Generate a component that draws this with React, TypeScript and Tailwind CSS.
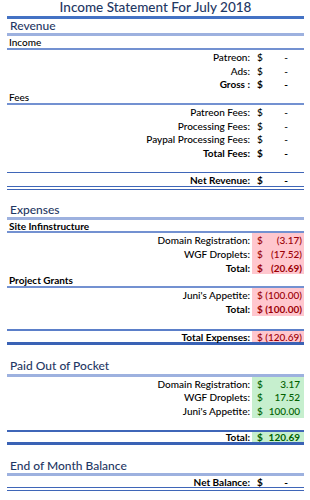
type Tone = 'none' | 'bad' | 'good';

type ItemProps = {
  label: string;
  value: string;
  bold?: boolean;
  valueBold?: boolean;
  tone?: Tone;
  className?: string;
};

function Item({ label, value, bold, valueBold, tone = 'none', className = '' }: ItemProps) {
  const toneCls =
    tone === 'bad'
      ? 'bg-[#FFC7CE] text-[#9C0006]'
      : tone === 'good'
        ? 'bg-[#C6EFCE] text-[#006100]'
        : 'text-black';
  const valuePad = value === '-' ? 'pr-[16px]' : value.startsWith('(') ? 'pr-[2px]' : 'pr-[4px]';

  return (
    <div className={`flex text-[10px] leading-none ${className}`}>
      <div className={`flex-1 flex items-center justify-end pr-[2px] text-black ${bold ? 'font-bold' : 'font-medium'}`}>
        {label}
      </div>
      <div className={`w-[52px] flex items-center justify-between pl-[5px] ${toneCls} ${valueBold ? 'font-bold' : 'font-medium'}`}>
        <span>$</span>
        <span className={valuePad}>{value}</span>
      </div>
    </div>
  );
}

function Heading({ children, className = '' }: { children: string; className?: string }) {
  return (
    <div className={`flex items-center pl-[3px] text-[12px] leading-none font-medium text-[#1F3864] ${className}`}>
      {children}
    </div>
  );
}

function Sub({ children, bold, className = '' }: { children: string; bold?: boolean; className?: string }) {
  return (
    <div className={`flex items-center pl-[2px] text-[10px] leading-none text-black ${bold ? 'font-bold' : 'font-medium'} ${className}`}>
      {children}
    </div>
  );
}

export default function App() {
  return (
    <div className="w-[310px] h-[500px] bg-white font-[Lato,'Liberation_Sans',sans-serif] overflow-hidden">
      <div className="ml-[7px] w-[297px] flex flex-col">
        {/* Title */}
        <div className="h-[19px] flex items-center justify-center border-b-[3px] border-[#4472C4] text-[13.5px] leading-none font-medium text-[#1F3864]">
          Income Statement For July 2018
        </div>

        {/* Revenue */}
        <Heading className="h-[17px] border-b-[3px] border-[#9DB1DF]">Revenue</Heading>
        <Sub className="h-[14px] border-b-2 border-[#7391D1]">Income</Sub>
        <Item className="h-[14px]" label="Patreon:" value="-" />
        <Item className="h-[13px]" label="Ads:" value="-" />
        <Item className="h-[13px]" label="Gross :" value="-" bold valueBold />
        <Sub className="h-[15px] border-b-2 border-[#7391D1]">Fees</Sub>
        <Item className="h-[14px]" label="Patreon Fees:" value="-" />
        <Item className="h-[13px]" label="Processing Fees:" value="-" />
        <Item className="h-[14px]" label="Paypal Processing Fees:" value="-" />
        <Item className="h-[13px]" label="Total Fees:" value="-" bold valueBold />
        <div className="h-[13px]" />
        <Item
          className="h-[18px] border-t border-b-4 border-double border-[#3F66B8]"
          label="Net Revenue:"
          value="-"
          bold
          valueBold
        />
        <div className="h-[13px]" />

        {/* Expenses */}
        <Heading className="h-[17px] border-b-[3px] border-[#9DB1DF]">Expenses</Heading>
        <Sub bold className="h-[13px] border-b-2 border-[#7391D1]">Site Infinstructure</Sub>
        <Item className="h-[14px]" label="Domain Registration:" value="(3.17)" tone="bad" />
        <Item className="h-[14px]" label="WGF Droplets:" value="(17.52)" tone="bad" />
        <Item className="h-[13px]" label="Total:" value="(20.69)" tone="bad" bold valueBold />
        <Sub bold className="h-[14px] border-b-2 border-[#7391D1]">Project Grants</Sub>
        <Item className="h-[14px]" label="Juni's Appetite:" value="(100.00)" tone="bad" />
        <Item className="h-[14px]" label="Total:" value="(100.00)" tone="bad" bold valueBold />
        <div className="h-[13px]" />
        <Item
          className="h-[16px] border-t-2 border-b-[3px] border-t-[#5B7FC9] border-b-[#3A62B5]"
          label="Total Expenses:"
          value="(120.69)"
          tone="bad"
          bold
        />
        <div className="h-[13px]" />

        {/* Paid out of pocket */}
        <Heading className="h-[19px] border-b-[3px] border-[#9DB1DF]">Paid Out of Pocket</Heading>
        <Item className="h-[13px]" label="Domain Registration:" value="3.17" tone="good" />
        <Item className="h-[14px]" label="WGF Droplets:" value="17.52" tone="good" />
        <Item className="h-[14px]" label="Juni's Appetite:" value="100.00" tone="good" />
        <div className="h-[12px]" />
        <Item
          className="h-[15px] border-t-2 border-b-[3px] border-t-[#3F66B8] border-b-[#3A62B5]"
          label="Total:"
          value="120.69"
          tone="good"
          bold
          valueBold
        />
        <div className="h-[13px]" />

        {/* Balance */}
        <Heading className="h-[18px] border-b-[3px] border-[#9DB1DF]">End of Month Balance</Heading>
        <Item
          className="h-[15px] border-b-4 border-double border-[#3F66B8]"
          label="Net Balance:"
          value="-"
          bold
          valueBold
        />
      </div>
    </div>
  );
}
